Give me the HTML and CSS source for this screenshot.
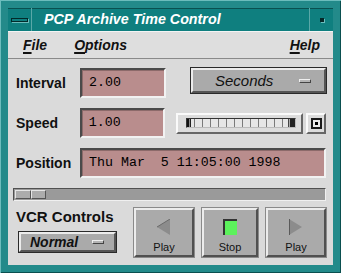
FILE: index.html
```html
<!DOCTYPE html>
<html lang="en">
<head>
    <meta charset="UTF-8">
    <meta name="viewport" content="width=device-width, initial-scale=1.0">
    <title>PCP Archive Time Control</title>
    <link rel="stylesheet" href="styles.css">
</head>
<body>
    <div class="window">
        <div class="titlebar">
            <div class="tb-btn tb-left"><span class="tb-bar"></span></div>
            <div class="tb-title">PCP Archive Time Control</div>
            <div class="tb-btn tb-right"><span class="tb-dot"></span></div>
        </div>

        <div class="menubar">
            <span class="menu"><u>F</u>ile</span>
            <span class="menu"><u>O</u>ptions</span>
            <span class="menu help"><u>H</u>elp</span>
        </div>

        <div class="panel">
            <div class="row">
                <div class="label">Interval</div>
                <div class="field short">2.00</div>
                <div class="option seconds">Seconds<span class="ind"></span></div>
            </div>

            <div class="row">
                <div class="label">Speed</div>
                <div class="field short">1.00</div>
                <div class="wheel"><div class="wheel-track"></div></div>
                <div class="wheel-btn"><span class="sq"><span class="sq-dot"></span></span></div>
            </div>

            <div class="row">
                <div class="label">Position</div>
                <div class="field wide">Thu Mar  5 11:05:00 1998</div>
            </div>

            <div class="scrollbar">
                <div class="thumb"><span></span><span></span></div>
            </div>

            <div class="vcr">
                <div class="vcr-left">
                    <div class="label vcr-label">VCR Controls</div>
                    <div class="option normal">Normal<span class="ind"></span></div>
                </div>
                <div class="vcr-buttons">
                    <div class="vbtn play-back">
                        <svg width="16" height="16" viewBox="0 0 16 16"><polygon points="14,0 1,8 14,16" fill="#8c8c8c"/><polyline points="14,0 1,8" stroke="#6a6a6a" fill="none"/></svg>
                        <span>Play</span>
                    </div>
                    <div class="vbtn stop">
                        <span class="stop-sq"></span>
                        <span>Stop</span>
                    </div>
                    <div class="vbtn play-fwd">
                        <svg width="16" height="16" viewBox="0 0 16 16"><polygon points="1,0 14,8 1,16" fill="#8c8c8c"/><line x1="1.5" y1="0" x2="1.5" y2="16" stroke="#5a5a5a"/></svg>
                        <span>Play</span>
                    </div>
                </div>
            </div>
        </div>
    </div>
</body>
</html>
```

FILE: styles.css
```css
body {
    margin: 0;
    font-family: "Liberation Sans", Arial, sans-serif;
}
.window {
    width: 341px;
    height: 273px;
    box-sizing: border-box;
    padding: 8px;
    background: #238a8a;
    box-shadow: inset 1px 1px 0 #6cbcbc, inset -1px -1px 0 #0a4f4f;
    display: flex;
    flex-direction: column;
}
.titlebar {
    height: 23px;
    display: flex;
    background: #0f7f7f;
    box-shadow: inset 0 1px 0 #0a5050;
}
.tb-btn {
    width: 24px;
    display: flex;
    align-items: center;
    justify-content: center;
    box-sizing: border-box;
}
.tb-left {
    border-right: 1px solid #5aa8a8;
}
.tb-right {
    border-left: 1px solid #5aa8a8;
}
.tb-bar {
    width: 15px;
    height: 2px;
    border: 1px solid #022a2a;
    background: #0f7f7f;
    box-shadow: 1px 1px 0 #6cbcbc;
}
.tb-dot {
    width: 4px;
    height: 4px;
    background: #062828;
    box-shadow: 1px 1px 0 #6cbcbc;
}
.tb-title {
    flex: 1;
    color: #fff;
    font-weight: bold;
    font-style: italic;
    font-size: 14.3px;
    line-height: 23px;
    padding-left: 12px;
}
.menubar {
    height: 28px;
    box-sizing: border-box;
    display: flex;
    align-items: center;
    padding: 0 13px 0 15px;
    background: #dedede;
    border-top: 1px solid #f4f4f4;
    border-bottom: 1px solid #8a8a8a;
}
.menu {
    font-weight: bold;
    font-style: italic;
    font-size: 14px;
    color: #111;
    margin-right: 27px;
}
.menu u {
    text-decoration-thickness: 2px;
    text-underline-offset: 2px;
}
.menu.help {
    margin-left: auto;
    margin-right: 0;
}
.panel {
    flex: 1;
    background: #dadada;
    padding: 9px 7px 0 8px;
    display: flex;
    flex-direction: column;
}
.row {
    display: flex;
    align-items: center;
    height: 30px;
    margin-bottom: 10px;
}
.label {
    width: 64px;
    font-weight: bold;
    font-size: 14px;
    color: #111;
}
.field {
    height: 30px;
    box-sizing: border-box;
    background: #b98d8d;
    border: 2px solid;
    border-color: #4a4a4a #f2f2f2 #f2f2f2 #4a4a4a;
    box-shadow: inset 1px 1px 0 #8c6a6a;
    font-family: "Liberation Mono", "DejaVu Sans Mono", monospace;
    font-size: 13.3px;
    line-height: 26px;
    padding-left: 7px;
    white-space: pre;
    color: #000;
}
.field.short {
    width: 86px;
}
.field.wide {
    flex: 1;
}
.option {
    height: 25px;
    box-sizing: border-box;
    background: #aaaaaa;
    border: 2px solid;
    border-color: #ececec #555 #555 #ececec;
    box-shadow: 0 0 0 1px #2a2a2a;
    display: flex;
    align-items: center;
    font-style: italic;
    color: #111;
}
.option .ind {
    width: 12px;
    height: 4px;
    box-sizing: border-box;
    background: #b4b4b4;
    border: 1px solid;
    border-color: #eee #444 #444 #eee;
}
.seconds {
    margin-left: auto;
    align-self: flex-start;
    width: 135px;
    font-size: 15px;
    padding: 0 13px 0 22px;
    justify-content: space-between;
}
.wheel {
    margin-left: 11px;
    width: 127px;
    height: 21px;
    box-sizing: border-box;
    background: #dcdcdc;
    border: 2px solid;
    border-color: #fafafa #666 #666 #fafafa;
    padding: 3px 5px 0 8px;
}
.wheel-track {
    height: 10px;
    box-sizing: border-box;
    border: 1px solid;
    border-color: #333 #bbb #bbb #333;
    background:
        linear-gradient(90deg, #111 0 2px, #888 2px 3px, #222 3px 4px, transparent 4px calc(100% - 7px), #444 calc(100% - 7px) calc(100% - 6px), #aaa calc(100% - 6px) calc(100% - 5px), #222 calc(100% - 5px)),
        repeating-linear-gradient(90deg, #e6e6e6 0 7px, #7a7a7a 7px 8px);
}
.wheel-btn {
    margin-left: 3px;
    width: 20px;
    height: 21px;
    box-sizing: border-box;
    background: #dcdcdc;
    border: 2px solid;
    border-color: #fafafa #666 #666 #fafafa;
    display: flex;
    align-items: center;
    justify-content: center;
}
.sq {
    width: 11px;
    height: 11px;
    box-sizing: border-box;
    border: 2px solid #1a1a1a;
    background: #ececec;
    display: flex;
    align-items: center;
    justify-content: center;
}
.sq-dot {
    width: 3px;
    height: 3px;
    background: #000;
}
.scrollbar {
    margin: 0 0 0 -3px;
    height: 13px;
    box-sizing: border-box;
    background: #9a9a9a;
    border: 1px solid;
    border-color: #505050 #f0f0f0 #f0f0f0 #505050;
    padding: 1px;
    display: flex;
}
.thumb {
    width: 31px;
    display: flex;
}
.thumb span {
    flex: 1;
    background: #acacac;
    border: 1px solid;
    border-color: #e6e6e6 #555 #555 #e6e6e6;
}
.vcr {
    margin-top: 7px;
    display: flex;
}
.vcr-left {
    width: 118px;
    display: flex;
    flex-direction: column;
}
.vcr-label {
    width: auto;
    font-size: 15px;
    line-height: 17px;
}
.normal {
    margin: 7px 0 0 3px;
    width: 97px;
    height: 20px;
    font-weight: bold;
    font-size: 14px;
    padding: 0 10px 0 9px;
    justify-content: space-between;
}
.vcr-buttons {
    display: flex;
    gap: 8px;
}
.vbtn {
    width: 60px;
    height: 49px;
    box-sizing: border-box;
    background: #aaaaaa;
    border: 2px solid;
    border-color: #ececec #505050 #505050 #ececec;
    box-shadow: 0 0 0 1px #8a8a8a;
    display: flex;
    flex-direction: column;
    align-items: center;
    padding-top: 9px;
    font-size: 11px;
    color: #111;
}
.vbtn span:last-child {
    margin-top: 6px;
}
.vbtn.stop {
    width: 56px;
}
.stop-sq {
    width: 14px;
    height: 16px;
    box-sizing: border-box;
    background: #5cf25c;
    border-top: 2px solid #333;
    border-left: 2px solid #333;
}
```
